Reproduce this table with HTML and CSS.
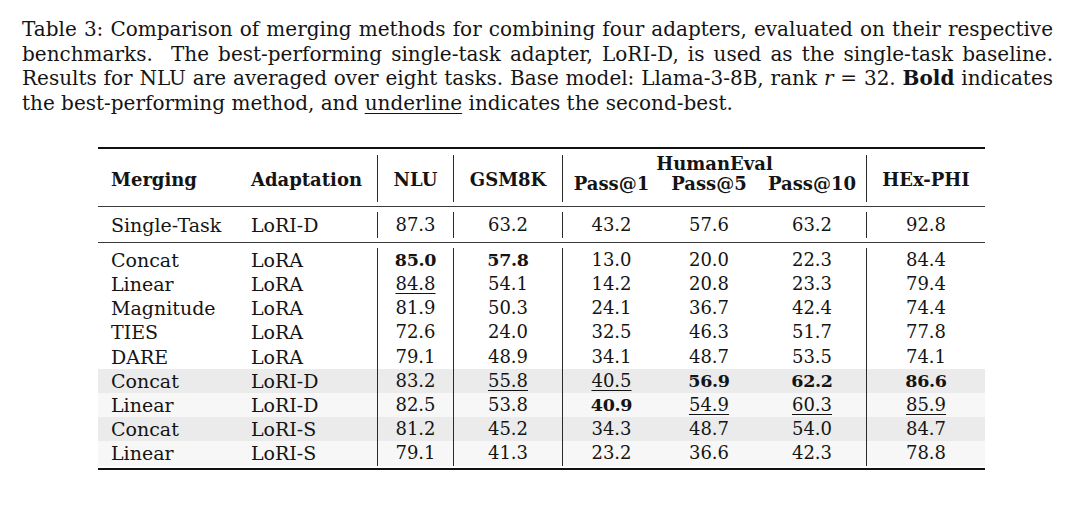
FILE: index.html
```html
<!DOCTYPE html>
<html lang="en">
<head>
<meta charset="utf-8">
<title>Table 3</title>
<link rel="stylesheet" href="styles.css">
</head>
<body>
<div class="page">
  <p class="caption">
    <span class="line">Table 3: Comparison of merging methods for combining four adapters, evaluated on their respective</span>
    <span class="line">benchmarks. &nbsp;The best-performing single-task adapter, LoRI-D, is used as the single-task baseline.</span>
    <span class="line">Results for NLU are averaged over eight tasks. Base model: Llama-3-8B, rank <i>r</i> = 32. <b>Bold</b> indicates</span>
    <span class="line last">the best-performing method, and <u>underline</u> indicates the second-best.</span>
  </p>

  <div class="tbl">
    <div class="sec sec-head">
      <div class="grid head">
        <div class="c txt span2">Merging</div>
        <div class="c txt span2">Adaptation</div>
        <div class="c num span2 vl">NLU</div>
        <div class="c num span2 vl">GSM8K</div>
        <div class="c he vl">HumanEval</div>
        <div class="c num span2 vl hx">HEx-PHI</div>
        <div class="c pass vl p1">Pass@1</div>
        <div class="c pass p5">Pass@5</div>
        <div class="c pass p10">Pass@10</div>
      </div>
    </div>

    <div class="sec sec-single">
      <div class="grid single">
        <div class="c txt">Single-Task</div>
        <div class="c txt">LoRI-D</div>
        <div class="c num vl">87.3</div>
        <div class="c num vl">63.2</div>
        <div class="c num vl">43.2</div>
        <div class="c num">57.6</div>
        <div class="c num">63.2</div>
        <div class="c num vl">92.8</div>
      </div>
    </div>

    <div class="sec sec-data">
      <div class="grid data">
        <div class="c txt">Concat</div><div class="c txt">LoRA</div>
        <div class="c num vl"><b>85.0</b></div><div class="c num vl"><b>57.8</b></div>
        <div class="c num vl">13.0</div><div class="c num">20.0</div><div class="c num">22.3</div>
        <div class="c num vl">84.4</div>
      </div>
      <div class="grid data">
        <div class="c txt">Linear</div><div class="c txt">LoRA</div>
        <div class="c num vl"><u>84.8</u></div><div class="c num vl">54.1</div>
        <div class="c num vl">14.2</div><div class="c num">20.8</div><div class="c num">23.3</div>
        <div class="c num vl">79.4</div>
      </div>
      <div class="grid data">
        <div class="c txt">Magnitude</div><div class="c txt">LoRA</div>
        <div class="c num vl">81.9</div><div class="c num vl">50.3</div>
        <div class="c num vl">24.1</div><div class="c num">36.7</div><div class="c num">42.4</div>
        <div class="c num vl">74.4</div>
      </div>
      <div class="grid data">
        <div class="c txt">TIES</div><div class="c txt">LoRA</div>
        <div class="c num vl">72.6</div><div class="c num vl">24.0</div>
        <div class="c num vl">32.5</div><div class="c num">46.3</div><div class="c num">51.7</div>
        <div class="c num vl">77.8</div>
      </div>
      <div class="grid data">
        <div class="c txt">DARE</div><div class="c txt">LoRA</div>
        <div class="c num vl">79.1</div><div class="c num vl">48.9</div>
        <div class="c num vl">34.1</div><div class="c num">48.7</div><div class="c num">53.5</div>
        <div class="c num vl">74.1</div>
      </div>
      <div class="grid data band-a">
        <div class="c txt">Concat</div><div class="c txt">LoRI-D</div>
        <div class="c num vl">83.2</div><div class="c num vl"><u>55.8</u></div>
        <div class="c num vl"><u>40.5</u></div><div class="c num"><b>56.9</b></div><div class="c num"><b>62.2</b></div>
        <div class="c num vl"><b>86.6</b></div>
      </div>
      <div class="grid data band-b">
        <div class="c txt">Linear</div><div class="c txt">LoRI-D</div>
        <div class="c num vl">82.5</div><div class="c num vl">53.8</div>
        <div class="c num vl"><b>40.9</b></div><div class="c num"><u>54.9</u></div><div class="c num"><u>60.3</u></div>
        <div class="c num vl"><u>85.9</u></div>
      </div>
      <div class="grid data band-a">
        <div class="c txt">Concat</div><div class="c txt">LoRI-S</div>
        <div class="c num vl">81.2</div><div class="c num vl">45.2</div>
        <div class="c num vl">34.3</div><div class="c num">48.7</div><div class="c num">54.0</div>
        <div class="c num vl">84.7</div>
      </div>
      <div class="grid data band-b">
        <div class="c txt">Linear</div><div class="c txt">LoRI-S</div>
        <div class="c num vl">79.1</div><div class="c num vl">41.3</div>
        <div class="c num vl">23.2</div><div class="c num">36.6</div><div class="c num">42.3</div>
        <div class="c num vl">78.8</div>
      </div>
    </div>
  </div>
</div>
</body>
</html>
```

FILE: styles.css
```css
* { box-sizing: border-box; }

html, body {
  margin: 0;
  padding: 0;
  background: #ffffff;
}

body {
  font-family: "DejaVu Serif", "Liberation Serif", serif;
  color: #141414;
}

.page {
  padding-top: 17px;
}

/* ---------- caption ---------- */
.caption {
  margin: 0 0 0 22px;
  width: 1031px;
  font-size: 20px;
  line-height: 24.7px;
  text-align: justify;
}

.caption .line {
  display: block;
  white-space: nowrap;
  text-align-last: justify;
  word-spacing: -3px;
}

.caption .line.last {
  text-align-last: left;
  word-spacing: 0;
}

.caption u {
  text-decoration-thickness: 1px;
  text-underline-offset: 3px;
}

/* ---------- table ---------- */
.tbl {
  margin: 31px 0 0 98px;
  width: 887px;
}

.grid {
  display: grid;
  grid-template-columns: 140px 139px 76px 109px 98px 98px 108px 119px;
}

.c {
  white-space: nowrap;
}

.txt {
  text-align: left;
  padding-left: 13px;
  font-size: 19px;
}

.num {
  text-align: center;
  font-size: 18px;
}

.vl {
  border-left: 1px solid #2a2a2a;
}

.num b {
  font-size: 17.5px;
  letter-spacing: -0.3px;
}

.num u {
  text-decoration-thickness: 1px;
  text-underline-offset: 3px;
}

/* sections with booktabs-like rules */
.sec-head {
  border-top: 2px solid #111;
  border-bottom: 1px solid #3a3a3a;
  padding: 6px 0 4px;
}

.sec-single {
  border-bottom: 1px solid #3a3a3a;
  padding: 5px 0 4px;
}

.sec-data {
  border-bottom: 2px solid #111;
  padding: 5px 0 2px;
}

/* header */
.head {
  grid-template-rows: 19px 28px;
  font-weight: bold;
}

.head .c {
  font-size: 18px;
}

.head .span2 {
  grid-row: 1 / 3;
  padding-top: 3px;
  line-height: 44px;
}

.head .he {
  grid-column: 5 / 8;
  grid-row: 1;
  text-align: center;
  line-height: 17px;
  padding-top: 0;
}

.head .hx {
  grid-column: 8;
}

.head .pass {
  grid-row: 2;
  text-align: center;
  line-height: 18px;
  padding-top: 1px;
}

.head .p1 { grid-column: 5; }
.head .p5 { grid-column: 6; }
.head .p10 { grid-column: 7; }

/* single-task row */
.single {
  height: 26px;
  line-height: 26px;
}

/* data rows */
.data {
  height: 24.2px;
  line-height: 24.2px;
}

.band-a { background: #ebebeb; }
.band-b { background: #f7f7f7; }
```
